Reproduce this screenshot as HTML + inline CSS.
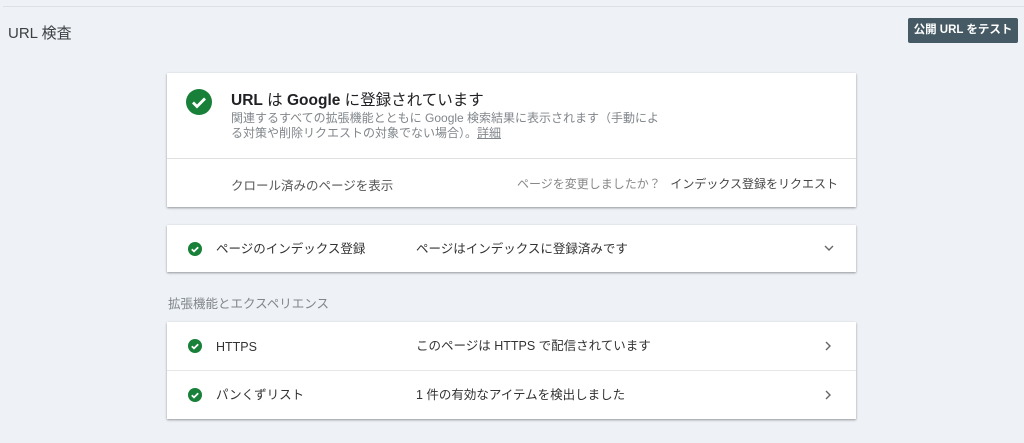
<!DOCTYPE html>
<html><head><meta charset="utf-8"><style>
*{margin:0;padding:0;box-sizing:border-box}
body{width:1024px;height:443px;background:#eef2f6;font-family:"Liberation Sans","Noto Sans CJK JP",sans-serif;position:relative;overflow:hidden;color:#202124}
.abs{position:absolute}
.card{position:absolute;left:167px;width:689px;background:#fff;box-shadow:0 1px 2px rgba(0,0,0,.3),0 1px 3px rgba(0,0,0,.1)}
.row{position:absolute;left:0;width:689px;height:48px;font-size:12.5px;color:#333;line-height:18px}
.row .ic{position:absolute;left:21px;top:17px}
.row .a{position:absolute;left:49px;top:15px}
.row .b{position:absolute;left:249px;top:15px}
</style></head><body>
<div class="abs" style="left:3px;top:6px;width:1021px;height:1px;background:#dde1e5"></div>
<div class="abs" style="left:8px;top:22px;font-size:15px;color:#3c4043">URL 検査</div>
<div class="abs" style="left:908px;top:18px;width:110px;height:25px;background:#455a64;color:#fff;font-size:11.5px;font-weight:bold;text-align:center;line-height:25px;border-radius:2px">公開 URL をテスト</div>

<div class="card" style="top:73px;height:134px">
  <svg class="abs" style="left:19px;top:16px" width="26" height="26" viewBox="0 0 26 26"><circle cx="13" cy="13" r="13" fill="#188038"/><path d="M7 13.5l4 4 8-8" stroke="#fff" stroke-width="2.8" fill="none"/></svg>
  <div class="abs" style="left:64px;top:15px;font-size:15.5px;color:#202124"><b>URL</b> は <b>Google</b> に登録されています</div>
  <div class="abs" style="left:64px;top:38px;width:440px;font-size:12px;line-height:15px;color:#80868b">関連するすべての拡張機能とともに Google 検索結果に表示されます（手動によ<br>る対策や削除リクエストの対象でない場合）。<u>詳細</u></div>
  <div class="abs" style="left:0;top:85px;width:689px;height:1px;background:#e0e0e0"></div>
  <div class="abs" style="left:64px;top:102px;font-size:12.5px;color:#555">クロール済みのページを表示</div>
  <div class="abs" style="left:350px;top:102px;font-size:12px;color:#888">ページを変更しましたか？</div>
  <div class="abs" style="right:18px;top:102px;font-size:12px;color:#444">インデックス登録をリクエスト</div>
</div>

<div class="card" style="top:225px;height:47px">
  <div class="row" style="top:0">
    <svg class="ic" width="14" height="14" viewBox="0 0 14 14"><circle cx="7" cy="7" r="7" fill="#188038"/><path d="M3.8 7.2l2.2 2.2 4.2-4.2" stroke="#fff" stroke-width="1.8" fill="none"/></svg>
    <div class="a">ページのインデックス登録</div><div class="b">ページはインデックスに登録済みです</div>
    <svg class="abs" style="right:22px;top:20px" width="10" height="7" viewBox="0 0 10 7"><path d="M1 1l4 4 4-4" stroke="#666" stroke-width="1.4" fill="none"/></svg>
  </div>
</div>

<div class="abs" style="left:168px;top:293px;font-size:12.5px;color:#80868b">拡張機能とエクスペリエンス</div>

<div class="card" style="top:322px;height:97px">
  <div class="row" style="top:0">
    <svg class="ic" width="14" height="14" viewBox="0 0 14 14"><circle cx="7" cy="7" r="7" fill="#188038"/><path d="M3.8 7.2l2.2 2.2 4.2-4.2" stroke="#fff" stroke-width="1.8" fill="none"/></svg>
    <div class="a" style="top:16px">HTTPS</div><div class="b">このページは HTTPS で配信されています</div>
    <svg class="abs" style="right:24px;top:19px" width="7" height="10" viewBox="0 0 7 10"><path d="M1 1l4 4-4 4" stroke="#666" stroke-width="1.4" fill="none"/></svg>
  </div>
  <div class="abs" style="left:0;top:48px;width:689px;height:1px;background:#e6e6e6"></div>
  <div class="row" style="top:49px">
    <svg class="ic" width="14" height="14" viewBox="0 0 14 14"><circle cx="7" cy="7" r="7" fill="#188038"/><path d="M3.8 7.2l2.2 2.2 4.2-4.2" stroke="#fff" stroke-width="1.8" fill="none"/></svg>
    <div class="a">パンくずリスト</div><div class="b">1 件の有効なアイテムを検出しました</div>
    <svg class="abs" style="right:24px;top:19px" width="7" height="10" viewBox="0 0 7 10"><path d="M1 1l4 4-4 4" stroke="#666" stroke-width="1.4" fill="none"/></svg>
  </div>
</div>
</body></html>
